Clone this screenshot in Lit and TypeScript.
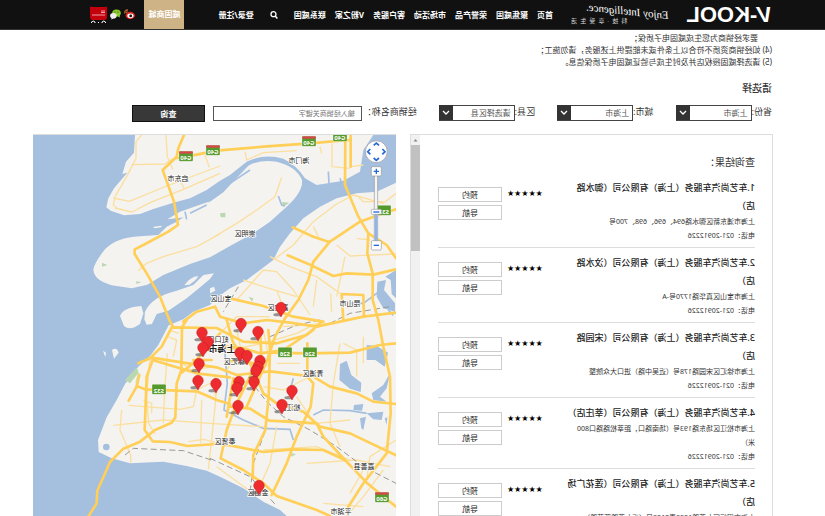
import { LitElement, html, css, svg } from "lit";
import { customElement } from "lit/decorators.js";

const NAV = ["首页", "聚焦威固", "荣誉产品", "市场活动", "客户服务", "V粉之家", "联系威固"];

const DEALERS = [
  { name: "1.车艺尚汽车服务（上海）有限公司（御水路店）", address: "上海市浦东新区御水路694、696、698、700号" },
  { name: "2.车艺尚汽车服务（上海）有限公司（汶水路店）", address: "上海市宝山区真华路1770号-A" },
  { name: "3.车艺尚汽车服务（上海）有限公司（宋园路店）", address: "上海市徐汇区宋园路178号（近吴中路）进口大众院整" },
  { name: "4.车艺尚汽车服务（上海）有限公司（莘庄店）", address: "上海市松江区场东路193号（场南路口，距莘松路路口800米）" },
  { name: "5.车艺尚汽车服务（上海）有限公司（莲花广场店）", address: "上海市闵行区七莘路1839弄2108号（近七莘路莲花路）" },
];

// The whole page is shown mirrored; map geometry is kept in on-screen orientation, in thirds of a pixel.
const MAP_FLIP = 1107;

const LAND = [
  "M315 15 L312 68 L288 95 L277 132 L292 128 L252 175 L235 205 L229 232 L242 242 L282 256 L330 252 L370 237 L430 218 L480 205 L530 180 L570 152 L600 135 L650 95 Q700 70 760 86 Q800 105 825 145 L860 165 L940 152 L990 125 L1000 60 L1030 15 Z",
  "M190 418 Q195 395 225 358 Q260 322 330 319 L385 315 L410 290 L440 275 L480 250 L540 215 L580 187 L605 160 L655 107 Q690 88 740 95 Q800 110 816 150 Q820 185 770 230 L720 275 L670 310 L600 348 L540 382 L480 402 L400 435 L352 464 L305 475 L245 466 Q190 450 190 418 Z",
  "M270 558 Q280 532 334 528 L340 550 L330 582 Q300 604 282 588 Z",
  "M345 545 Q365 500 440 482 L490 465 L520 435 L552 430 L540 447 L515 468 L470 505 L415 542 L380 552 L366 582 L350 584 L343 568 Z",
  "M463 466 Q480 440 505 438 Q500 450 478 464 Z",
  "M368 291 L392 287 L396 291 L375 295 Z",
  "M412 268 L450 245 L540 214 L530 222 L466 262 Z",
  "M246 660 Q260 650 266 668 L252 686 Z",
  "M219 662 L228 668 L226 682 Z",
  "M1098 158 L1040 185 L980 190 L920 205 L870 230 L820 265 L780 310 L750 350 L730 390 L690 420 L650 450 L600 475 L565 500 L540 525 L490 545 L460 568 L416 586 L385 645 L362 676 L325 710 L285 762 L260 810 L230 862 L204 930 L206 966 L245 985 L300 1000 L400 995 L470 1008 L530 1022 L570 1040 L640 1075 L700 1115 L750 1140 L770 1158 L1098 1158 Z",
  "M540 475 L552 470 L556 482 L540 490 Z",
];

const LAKES = [
  "M930 702 L950 692 L964 735 L994 758 L992 786 L960 776 L928 750 Z",
  "M1010 645 L1040 648 L1074 668 L1064 710 L1036 690 L1010 690 Z",
  "M1025 790 L1060 765 L1080 730 L1070 775 L1050 800 L1070 815 L1030 810 Z",
  "M1042 455 L1068 450 L1062 480 L1095 520 L1095 545 L1060 535 L1040 500 Z",
  "M1066 440 L1098 420 L1098 505 L1085 492 L1082 450 Z",
  "M972 825 L1000 822 L996 842 L970 840 Z",
  "M1010 850 L1060 845 L1055 870 L1030 868 Z",
  "M1064 865 L1072 862 L1070 885 Z",
  "M990 865 L1008 860 L1000 900 L994 895 Z",
];

const CREEKS = [
  "M540 178 L600 160 L660 120",
  "M465 245 L470 268 M480 250 L530 225",
  "M745 198 L755 225 L765 228 M895 125 L897 160 M930 145 L935 160",
  "M585 670 L592 760 L582 840 L640 870 L700 895 L780 898 L790 930",
  "M790 745 L778 790 M850 855 L880 840 L960 842 L1010 850",
  "M1060 475 L1000 520 L960 520 M1075 540 L1090 556",
];

const MINOR = [
  "M335 15 L318 35 L318 85 L290 140 L255 200 M250 204 L298 214 L410 168 L570 108 M255 234 L306 246 L360 218 L460 178 L570 130 M305 104 L405 102 L430 85 M408 15 L412 80 L428 118 M525 75 L538 112 M445 140 L462 175",
  "M255 200 L250 225 L262 236",
  "M570 312 L500 350 L400 380 L350 400 L325 422 M540 328 L620 280 L680 240 L735 200 L755 142",
  "M645 65 L650 90 L700 68 L800 62 M870 50 L875 70 M906 40 L906 110 L960 115 M962 110 L1000 105",
  "M730 390 L790 345 L850 275 L915 225 L970 195 L1060 220 L1098 190 M985 200 L1000 215 L1060 215",
  "M850 290 L870 330 M920 345 L960 378 L1000 376 L1098 372 M945 380 L920 500 M850 400 L900 330 M980 325 L1020 330",
  "M720 380 L780 410 L860 440 L930 490 M700 420 L740 425 L790 480 L840 555 M640 450 L700 470 L800 500 M620 510 L700 420 M740 480 L770 560 M860 450 L850 530 M905 545 L902 490",
  "M570 610 L620 560 L720 560 M540 640 L600 660 L700 640 L800 610 L860 580 M620 600 L640 690 M760 590 L900 580 M590 720 L640 650 M700 600 L720 700 L640 760",
  "M360 680 L350 800 L356 880 L375 912 M412 670 L404 780 L400 880 M250 886 L400 870 L540 880 L700 890 M296 826 L450 838 L490 830 L500 780 L540 760",
  "M412 620 L440 630 L430 680 M418 600 L446 610 M450 690 L480 720 L540 712 M515 810 L512 940 M560 780 L550 880 L535 1018 M475 935 L520 928 L570 940 M275 840 L270 900 L302 975 L302 998 M340 810 L365 820 L365 850 M555 740 L556 800",
  "M700 770 L760 780 L880 720 M740 700 L810 700 M940 640 L980 660 L980 740 M1000 620 L1000 700 M930 640 L910 760 L900 880 L930 950 M800 800 L840 860 M760 870 L860 880 L960 870",
  "M700 960 L860 950 L960 990 M740 890 L720 1000 L680 1090 M680 1098 L560 1010 M830 1000 L980 990 L1080 1010 M1000 1020 L960 1090 M880 1120 L1000 1130 M1060 1020 L1000 1100 L950 1158 M1098 930 L1020 980 L1010 1050",
];

const MAJOR = [
  "M462 15 L445 55 L440 80 L398 120 L432 215 L444 285 L415 305 L340 345 L314 358 L314 372 L350 430 L390 500 L418 570 L430 592",
  "M440 84 L500 74 L560 62 L700 50 L840 40 L955 30 M946 15 L945 165 L985 260 L1015 310 L1070 345 L1098 385 M962 15 L962 110",
  "M788 292 L850 320 L895 335 M773 376 L842 405 L910 438 L950 430 L1030 434 L1098 418",
  "M1098 238 L1060 250 L990 275 L900 335 L850 395 L835 450 L805 510 L765 565",
  "M1015 310 L1012 370 L1028 430 L1028 510 L1045 570 L1060 650 L1080 740 L1082 850 L1070 970 L1000 1060 L955 1130",
  "M460 575 L500 545 L555 530 L570 560 L640 580 L710 570 L780 578 L860 590 L1000 560 L1098 548",
  "M600 505 L700 528 L790 560 L880 575 M940 570 L935 492 L1000 495 L1002 560",
  "M425 592 L560 594 L640 635 L740 640 L830 615 L875 575 M425 592 L395 650 L360 685 L325 700 M328 735 L320 770 L296 812",
  "M470 570 L456 592 L454 720 L440 760 L436 862 L425 878 L375 900 L330 935 L280 956 L240 996 L202 1082 L200 1120 L176 1158",
  "M368 690 L350 740 L344 900 L368 934 L420 936 L472 948 L560 942 L600 946 L700 966 L790 958 L880 960 L945 990",
  "M320 768 L345 778 L500 784 L560 810 L600 822 M360 682 L460 698 L560 712 L620 735 L720 724 L850 740 L900 770 L980 790 L1030 815 L1098 822",
  "M368 690 L500 730 L600 742 M455 728 L500 690 L540 640 L570 610",
  "M590 570 L610 640 L660 700 L700 790 L740 820 L820 845 L870 890 L960 910 L1098 976",
  "M690 595 L694 680 L660 740 L620 820 L590 900 L572 985 L640 1020 L700 1060 L740 1098 L860 1140 L900 1158",
  "M765 565 L735 620 L712 690 L650 830 M715 600 L720 660 L716 800 L706 900 L670 975 L668 1045",
  "M716 668 L830 670 L960 668 L1050 645 L1098 640 M832 640 L832 740 L850 760 L842 830 L800 920 L770 1000 L725 1095",
  "M600 830 L660 836 L718 872 L860 880 L880 920 L945 990 L1010 1058 L1098 1130 M490 690 L545 690 M590 690 L680 700 M610 745 L590 860",
  "M560 660 L590 650 L640 655 L690 670 L760 660 L850 600",
];

const RAILS = ["M285 975 L310 955 L460 962 L550 992", "M675 770 L710 815 L760 860 L840 900 L920 950 L1000 1010 L1098 1060", "M705 905 L670 1000 L660 1090", "M540 985 L660 1040 L740 1128", "M625 470 L580 545 M720 620 L800 585 L870 570 M900 580 L960 550 L1080 530"];

const GREENS = ["M285 750 L320 712 L326 728 L300 760 Z", "M216 398 L232 405 L216 410 Z", "M318 454 L334 456 L320 462 Z", "M570 250 L586 248 L586 262 L572 262 Z", "M756 216 L778 218 L760 230 Z", "M315 762 L325 728 L330 735 Z", "M656 500 L670 505 L666 515 Z", "M782 970 L798 972 L785 980 Z"];

const PINS = [
  [281, 309], [241, 325], [258, 333], [202, 334], [208, 343], [203, 349], [199, 365], [198, 382], [216, 385], [240, 354], [247, 357],
  [260, 362], [258, 368], [256, 372], [239, 383], [254, 383], [237, 389], [238, 407], [292, 392], [282, 406], [259, 487],
];

const CITIES: [string, number, number][] = [
  ["启东市", 178, 178], ["海门市", 299, 160], ["崇明区", 245, 233], ["宝山区", 221, 298], ["嘉定区", 278, 307], ["昆山市", 350, 303],
  ["虹口区", 218, 339], ["徐汇区", 234, 361], ["青浦区", 313, 373], ["松江区", 290, 407], ["奉贤区", 225, 441], ["嘉善县", 364, 466],
  ["金山区", 258, 492], ["平湖市", 341, 511],
];

const SHIELDS: [string, number, number, boolean][] = [
  ["G40", 186, 156, true], ["G40", 213, 150, true], ["G40", 309, 141, true], ["G40", 340, 136, true],
  ["S32", 384, 210, false], ["S26", 285, 352, false], ["S26", 310, 352, false], ["S32", 159, 389, false], ["G60", 382, 497, true],
];

const gx = (x: number) => (x - 30) * 3;
const gy = (y: number) => (y - 130) * 3;

@customElement("dealer-map")
export class DealerMap extends LitElement {
  static styles = css`
    :host { display: block; overflow: hidden; background: #a5bfdf; }
    svg { display: block; width: 100%; height: 100%; }
    .land { fill: #f4f3f0; }
    .lake { fill: #a5bfdf; }
    .green { fill: #b9d7b0; }
    .creek { fill: none; stroke: #a5bfdf; stroke-width: 5; }
    .minor { fill: none; stroke: #fbdf9f; stroke-width: 4; stroke-linejoin: round; }
    .major { fill: none; stroke: #ffcf57; stroke-width: 8; stroke-linejoin: round; stroke-linecap: round; }
    .rail { fill: none; stroke: #999; stroke-width: 3; stroke-dasharray: 18 10; }
    .label, .code { font-family: "Noto Sans", "Noto Sans CJK SC", sans-serif; text-anchor: middle; }
    .label { font-size: 21px; fill: #222; stroke: #fff; stroke-width: 4; paint-order: stroke; }
    .capital { font-size: 27px; font-weight: 700; }
    .code { font-size: 18px; font-weight: 700; fill: #fff; }
  `;

  render() {
    return html`<svg viewBox="9 15 1089 1143" preserveAspectRatio="xMidYMin slice" role="img" aria-label="上海市经销商地图">
      <g transform="translate(${MAP_FLIP} 0) scale(-1 1)">
        ${LAND.map((d) => svg`<path class="land" d=${d} />`)}
        ${LAKES.map((d) => svg`<path class="lake" d=${d} />`)}
        ${GREENS.map((d) => svg`<path class="green" d=${d} />`)}
        ${CREEKS.map((d) => svg`<path class="creek" d=${d} />`)}
        ${MINOR.map((d) => svg`<path class="minor" d=${d} />`)}
        ${RAILS.map((d) => svg`<path class="rail" d=${d} />`)}
        ${MAJOR.map((d) => svg`<path class="major" d=${d} />`)}
        <circle class="lake" cx="229" cy="951" r="10" />
      </g>
      ${SHIELDS.map(([code, x, y, national]) => {
        const cx = MAP_FLIP - gx(x);
        const cy = gy(y);
        return svg`<rect x=${cx - 21} y=${cy - 14} width="42" height="30" rx="3" fill="#559a2c" stroke="#fff" />
          ${national ? svg`<rect x=${cx - 20} y=${cy - 14} width="40" height="7" fill="#d8484a" />` : ""}
          <text class="code" x=${cx} y=${cy + 11}>${code}</text>`;
      })}
      ${CITIES.map(([name, x, y]) => svg`<text class="label" x=${MAP_FLIP - gx(x)} y=${gy(y) + 8}>${name}</text>`)}
      <text class="label capital" x=${MAP_FLIP - gx(222)} y=${gy(349) + 10}>上海市</text>
      <g transform="translate(${MAP_FLIP} 0) scale(-1 1)">
        ${PINS.map(([x, y]) => svg`<g transform="translate(${gx(x)} ${gy(y)})">
          <ellipse cx="-10" cy="17" rx="13" ry="5" fill="#555" opacity="0.6" />
          <path d="M0 24 C-4 12 -16 6 -16 -4 A16 16 0 0 1 16 -4 C16 6 4 12 0 24 Z" fill="#ee2b2f" stroke="#c11b20" stroke-width="1.5" />
        </g>`)}
        <rect x="1033" y="125" width="10" height="225" rx="3" fill="#f4f4f4" stroke="#999" stroke-width="2" />
        <rect x="1034" y="250" width="8" height="85" fill="#8eb4f0" />
        <circle cx="1039" cy="65" r="33" fill="#fff" stroke="#aab" stroke-width="3" />
        <path d="M1031 46 L1039 39 L1047 46 M1031 84 L1039 91 L1047 84 M1021 57 L1013 65 L1021 73 M1057 57 L1065 65 L1057 73" fill="none" stroke="#2668d4" stroke-width="5" />
        <rect x="1024" y="110" width="30" height="28" rx="4" fill="#fff" stroke="#999" stroke-width="2" />
        <path d="M1031 124 H1047 M1039 116 V132" stroke="#2668d4" stroke-width="4" />
        <rect x="1024" y="332" width="30" height="28" rx="4" fill="#fff" stroke="#999" stroke-width="2" />
        <path d="M1031 346 H1047" stroke="#2668d4" stroke-width="4" />
        <rect x="1024" y="238" width="30" height="15" rx="3" fill="#fff" stroke="#999" stroke-width="2" />
        <path d="M1030 246 H1048" stroke="#2668d4" stroke-width="4" />
      </g>
    </svg>`;
  }
}

@customElement("app-root")
export class AppRoot extends LitElement {
  static styles = css`
    :host {
      display: flex; flex-direction: column; height: 100vh; overflow: hidden;
      background: #fff; color: #333; transform: scaleX(-1);
      font-family: "Noto Sans", "Noto Sans CJK SC", sans-serif; font-size: 8px;
      text-spacing-trim: space-all;
    }
    * { box-sizing: border-box; }
    h1, h2, h3, p, ul, ol { margin: 0; padding: 0; list-style: none; }
    a { color: inherit; text-decoration: none; white-space: nowrap; }
    button, input, select { font: inherit; margin: 0; border-radius: 0; }

    .header { display: flex; flex: none; align-items: center; height: 30px; padding-left: 53px; background: #111; color: #fff; border-bottom: 1px solid #333; }
    .logo { width: 86px; font: 700 22px/28px "Liberation Sans", sans-serif; }
    .slogan { width: 98px; margin: 0 18px 0 17px; }
    .script { font: italic 11px/13px "Liberation Serif", serif; transform: rotate(-6deg); white-space: nowrap; }
    .motto { font-size: 6px; line-height: 9px; text-align: right; white-space: pre; color: #ddd; }
    .nav { display: flex; gap: 9px; font-weight: 700; line-height: 28px; }
    .search { display: flex; margin: 0 16px; padding: 0; border: 0; background: none; }
    .login { font-weight: 700; }
    .mall { align-self: stretch; width: 40px; margin: 0 9px 0 34px; background: #cdb385; font-weight: 700; line-height: 28px; text-align: center; }
    .social { display: flex; align-items: center; gap: 3px; }
    .social a, .social svg, .search svg { display: block; }

    .content { display: flex; flex: 1; flex-direction: column; min-height: 0; padding: 2px 33px 0 53px; }
    .rules { line-height: 12px; }
    .continued { padding-left: 14px; }
    .choose { margin-top: 13px; font-size: 10px; font-weight: 500; line-height: 14px; }
    .filters { display: flex; gap: 22px; margin-top: 10px; height: 17px; }
    .field { display: flex; font-size: 9px; line-height: 14px; white-space: nowrap; }
    .picker { display: grid; grid-template-columns: 62px 14px; height: 15px; }
    .picker select { grid-area: 1 / 1 / 2 / 3; width: 76px; padding: 0 0 0 3px; border: 1px solid #444; background: #fff; color: #555; font-size: 8px; appearance: none; }
    .picker svg { grid-area: 1 / 2; width: 14px; height: 15px; z-index: 1; pointer-events: none; }
    .keyword { flex: 1; gap: 1px; }
    .keyword input { flex: 1; width: 0; height: 15px; margin-top: 1px; padding: 0 6px; border: 1px solid #555; font-size: 7px; }
    .keyword input::placeholder { color: #777; }
    .submit { width: 73px; margin: 0 99px 0 -14px; padding: 0; border: 1px solid #111; background: #383838; color: #fff; font-weight: 700; }

    .panels { display: grid; flex: 1; grid-template-columns: 1fr 1fr; gap: 14px; min-height: 0; margin: 12px 0 0 -1px; }
    .results { display: flex; min-width: 0; min-height: 0; overflow: hidden; border: 1px solid #ddd; border-bottom: 0; }
    .list { flex: 1; min-width: 0; padding: 20px 18px 0 17px; }
    .list h2 { font-size: 10px; font-weight: 400; line-height: 14px; }
    .list ol { margin-top: 4px; }
    .dealer { display: grid; grid-template-columns: 190px 1fr 64px; gap: 0 5px; padding: 6px 0 4px; border-bottom: 1px solid #ddd; }
    .dealer h3 { font-size: 9px; font-weight: 500; line-height: 18px; color: #222; }
    .dealer p { font-size: 7px; line-height: 14px; }
    .stars { padding-top: 8px; font: 8px/14px "DejaVu Sans", sans-serif; color: #000; text-align: right; white-space: nowrap; }
    .actions { display: flex; flex-direction: column; gap: 3px; padding-top: 8px; }
    .actions button { height: 15px; padding: 0; border: 1px solid #ccc; background: #fff; color: #222; line-height: 13px; }
    .scroll { flex: none; width: 9px; background: #f1f1f1; }
    .scroll svg { display: block; width: 9px; height: 10px; }
    .thumb { height: 106px; background: #c1c1c1; }
    dealer-map { border-top: 1px solid #ddd; }
  `;

  private picker(id: string, label: string, value: string) {
    return html`<div class="field">
      <label for=${id}>${label}:</label>
      <div class="picker">
        <select id=${id}><option>${value}</option></select>
        <svg viewBox="0 0 14 15"><path d="M0 0H14V15H0Z" fill="#333" /><path d="M4 6L7 9L10 6" fill="none" stroke="#fff" stroke-width="1.3" /></svg>
      </div>
    </div>`;
  }

  render() {
    return html`
      <header class="header">
        <h1 class="logo"><i>V</i>-KOOL</h1>
        <div class="slogan">
          <p class="script">Enjoy Intelligence.</p>
          <p class="motto">科  技  ·  享  受  生  活</p>
        </div>
        <nav class="nav">${NAV.map((item) => html`<a href="#">${item}</a>`)}</nav>
        <button class="search" aria-label="搜索">
          <svg width="8" height="8" viewBox="0 0 8 8"><circle cx="4.5" cy="3.2" r="2.5" fill="none" stroke="#fff" stroke-width="1.3" /><path d="M2.8 5L0.6 7.4" stroke="#fff" stroke-width="1.5" /></svg>
        </button>
        <a class="login" href="#">登录/注册</a>
        <a class="mall" href="#">威固商城</a>
        <div class="social">
          <a href="#" aria-label="微博">
            <svg width="11" height="11" viewBox="0 0 11 11"><ellipse cx="4.7" cy="6.5" rx="4.7" ry="3.7" fill="#e2231a" /><ellipse cx="4.6" cy="6.8" rx="3.1" ry="2.4" fill="#fff" /><circle cx="4.3" cy="6.9" r="1.4" fill="#111" /><path d="M7 1Q10.5 .8 10.3 4.5M7.2 2.8Q8.8 2.7 8.7 4.3" fill="none" stroke="#b5622c" stroke-width="1.3" /></svg>
          </a>
          <a href="#" aria-label="微信">
            <svg width="11" height="11" viewBox="0 0 11 11"><ellipse cx="4.5" cy="4" rx="4.3" ry="3.5" fill="#8ccc28" /><path d="M1.5 6L1 8.5L4 7Z" fill="#8ccc28" /><ellipse cx="7.6" cy="6.8" rx="3.3" ry="2.8" fill="#eee" /><path d="M9 9L10 10.5L7 9.5Z" fill="#eee" /><circle cx="3" cy="3" r=".6" fill="#333" /><circle cx="6" cy="3" r=".6" fill="#333" /></svg>
          </a>
          <a href="#" aria-label="天猫">
            <svg width="17" height="18" viewBox="0 0 17 18"><path d="M0 1Q1 0 2 1H15Q16 0 17 1V11Q17 14 14 14H3Q0 14 0 11Z" fill="#c4000d" /><path d="M2 5H6M2 6.5H6M2 9H15" stroke="#fff" stroke-width=".8" opacity=".8" /><path d="M1.5 17V16Q3.2 14 5 16V17M12 17V16Q13.8 14 15.5 16V17M8 16.5H9" fill="none" stroke="#fff" /></svg>
          </a>
        </div>
      </header>
      <main class="content">
        <div class="rules">
          <p class="continued">要求经销商为您生成威固电子质保；</p>
          <p>(4) 如经销商资质不符合以上条件或未能提供上述服务，请勿施工；</p>
          <p>(5) 请选择威固授权店并及时生成与验证威固电子质保信息。</p>
        </div>
        <h2 class="choose">请选择</h2>
        <form class="filters">
          ${this.picker("province", "省份", "上海市")}
          ${this.picker("city", "城市", "上海市")}
          ${this.picker("district", "区县", "请选择区县")}
          <div class="field keyword">
            <label for="keyword">经销商名称：</label>
            <input id="keyword" type="text" placeholder="输入经销商关键字" />
          </div>
          <button class="submit" type="button">查询</button>
        </form>
        <div class="panels">
          <section class="results">
            <div class="list">
              <h2>查询结果：</h2>
              <ol>
                ${DEALERS.map((dealer) => html`<li class="dealer">
                  <div>
                    <h3>${dealer.name}</h3>
                    <p>${dealer.address}</p>
                    <p>电话：021-20912226</p>
                  </div>
                  <div class="stars">★★★★★</div>
                  <div class="actions"><button>预约</button><button>导航</button></div>
                </li>`)}
              </ol>
            </div>
            <div class="scroll">
              <svg viewBox="0 0 9 10"><path d="M2.5 6.5L4.5 4L6.5 6.5Z" fill="#888" /></svg>
              <div class="thumb"></div>
            </div>
          </section>
          <dealer-map></dealer-map>
        </div>
      </main>
    `;
  }
}
